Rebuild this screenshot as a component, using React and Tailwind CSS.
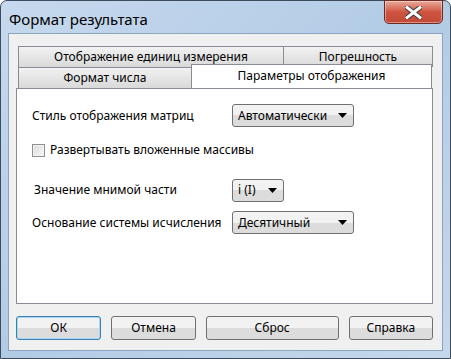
import React from 'react';

const font = { fontFamily: '"Noto Sans", "Open Sans", "DejaVu Sans", sans-serif' };

function Combo({ value, width }) {
  return (
    <div className={`${width} h-[23px] flex items-center justify-between pl-[5px] pr-[6px] rounded-[3px] border border-[#707070] bg-gradient-to-b from-[#f2f2f2] from-50% to-[#dcdcdc] to-50% text-[12px] text-black`}>
      <span className="leading-none">{value}</span>
      <svg width="9" height="5" viewBox="0 0 9 5"><path d="M0 0H9L4.5 5Z" fill="#000" /></svg>
    </div>
  );
}

function Button({ label, width, focused }) {
  return (
    <div className={`${width} h-[24px] flex items-center justify-center rounded-[3px] border ${focused ? 'border-[#3c7fb1] shadow-[inset_0_0_0_1px_#a6d7f5]' : 'border-[#707070]'} bg-gradient-to-b from-[#f2f2f2] from-50% to-[#dcdcdc] to-50% text-[12px] text-black`}>
      {label}
    </div>
  );
}

export default function App() {
  return (
    <div style={font} className="w-[451px] h-[359px] flex flex-col rounded-t-[7px] border border-[#3d4c5c] bg-gradient-to-br from-[#c6d9ee] via-[#b2cbe5] to-[#c5d8ec] px-[7px] pb-[7px]">
      {/* title bar */}
      <div className="h-[32px] flex items-start justify-between">
        <span className="pl-[1px] pt-[8px] text-[15px] leading-[20px] text-black">Формат результата</span>
        <div className="w-[59px] h-[24px] -mt-[1px] flex items-center justify-center rounded-b-[5px] border border-[#6f2a20] bg-gradient-to-b from-[#e8a99c] via-[#cf5440] to-[#c14a36] shadow-[inset_0_0_0_1px_rgba(255,255,255,0.4)]">
          <svg width="17" height="13" viewBox="0 0 17 13">
            <path d="M2 1.5L15 11.5M15 1.5L2 11.5" stroke="#3b3b3b" strokeWidth="5" strokeLinecap="square" />
            <path d="M2 1.5L15 11.5M15 1.5L2 11.5" stroke="#fff" strokeWidth="3" strokeLinecap="square" />
          </svg>
        </div>
      </div>

      {/* client area */}
      <div className="flex-1 flex flex-col bg-[#f0f0f0] border border-[#8ea3bc] pl-[7px] pr-[9px] pt-[12px]">
        {/* back tab row */}
        <div className="flex pl-[2px] h-[21px]">
          <div className="w-[266px] h-[21px] flex items-center justify-center border border-[#898c95] border-b-0 bg-gradient-to-b from-[#f2f2f2] to-[#d9d9d9] text-[12px] text-black">
            Отображение единиц измерения
          </div>
          <div className="w-[149px] h-[21px] flex items-center justify-center border border-l-0 border-[#898c95] border-b-0 bg-gradient-to-b from-[#f2f2f2] to-[#d9d9d9] text-[12px] text-black">
            Погрешность
          </div>
        </div>
        {/* front tab row */}
        <div className="flex pl-[2px] h-[21px] items-start">
          <div className="w-[174px] h-[21px] flex items-center justify-center border border-[#898c95] border-b-0 bg-gradient-to-b from-[#f2f2f2] to-[#d9d9d9] text-[12px] text-black">
            Формат числа
          </div>
          <div className="w-[241px] h-[24px] -mt-[3px] -ml-[1px] z-10 flex items-start justify-center pt-[2px] border border-[#898c95] border-b-0 bg-white text-[12px] text-black">
            Параметры отображения
          </div>
        </div>
        {/* panel */}
        <div className="h-[216px] border border-[#898c95] bg-white flex flex-col pl-[15px] pt-[15px] text-[12px] text-black">
          <div className="flex items-center h-[23px]">
            <span className="w-[200px]">Стиль отображения матриц</span>
            <Combo value="Автоматически" width="w-[122px]" />
          </div>
          <label className="flex items-center mt-[16px] h-[14px]">
            <span className="w-[13px] h-[13px] border border-[#8e8f8f] bg-gradient-to-br from-[#dcdcdc] to-[#f6f6f6] shadow-[inset_0_0_0_1px_#f4f4f4]" />
            <span className="ml-[5px]">Развертывать вложенные массивы</span>
          </label>
          <div className="flex items-center h-[22px] mt-[22px]">
            <span className="w-[200px] pl-[2px]">Значение мнимой части</span>
            <Combo value="i (I)" width="w-[52px]" />
          </div>
          <div className="flex items-center h-[23px] mt-[10px]">
            <span className="w-[200px]">Основание системы исчисления</span>
            <Combo value="Десятичный" width="w-[122px]" />
          </div>
        </div>
        {/* buttons */}
        <div className="flex mt-[12px] gap-[10px]">
          <Button label="ОК" width="w-[86px]" focused />
          <Button label="Отмена" width="w-[85px]" />
          <Button label="Сброс" width="w-[134px]" />
          <Button label="Справка" width="w-[85px]" />
        </div>
      </div>
    </div>
  );
}
